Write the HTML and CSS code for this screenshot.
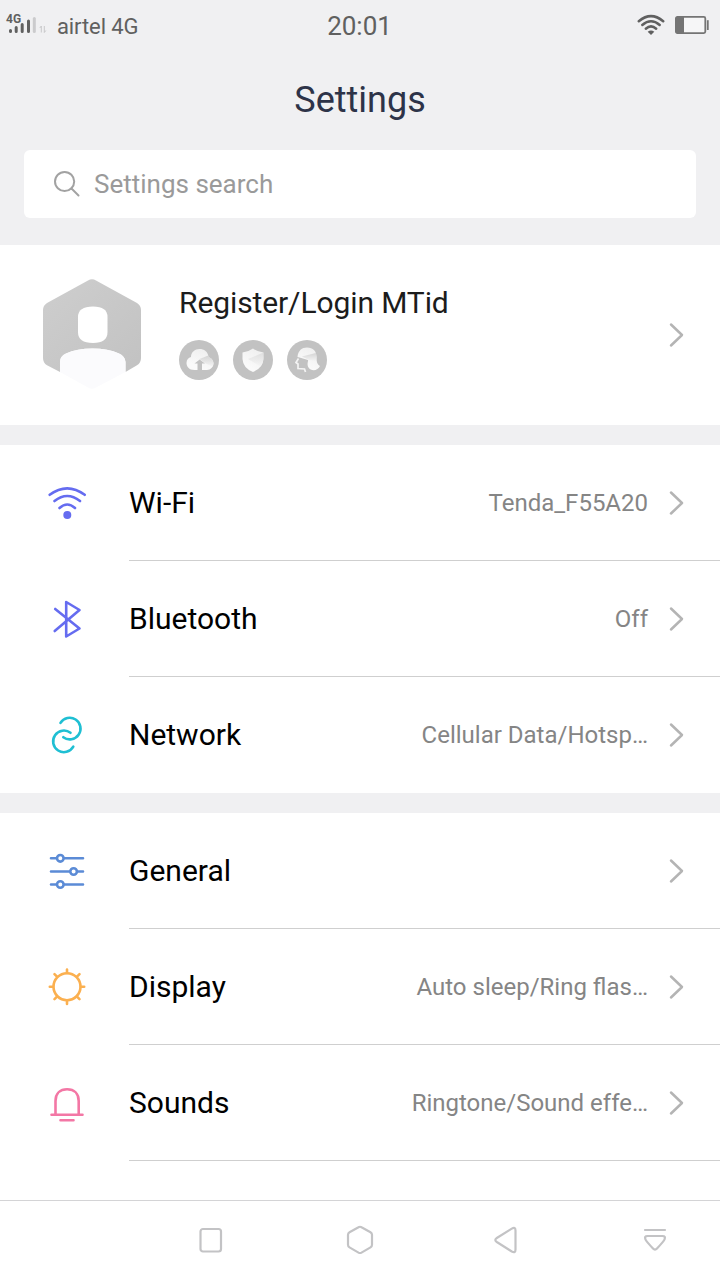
FILE: index.html
```html
<!DOCTYPE html>
<html lang="en">
<head>
    <meta charset="UTF-8">
    <meta name="viewport" content="width=device-width, initial-scale=1.0">
    <title>Settings</title>
    <link rel="stylesheet" href="styles.css">
</head>
<body>
    <svg class="defs" width="0" height="0">
        <symbol id="chevron" viewBox="0 0 16 26">
            <path d="M2 2.5L13 13L2 23.5" fill="none" stroke="#b4b4b4" stroke-width="2.5" stroke-linecap="round" stroke-linejoin="round"/>
        </symbol>
        <linearGradient id="hexFill" x1="0" y1="0" x2="1" y2="1">
            <stop offset="0" stop-color="#cecece"/>
            <stop offset="1" stop-color="#c2c2c2"/>
        </linearGradient>
        <linearGradient id="fade" x1="0" y1="1" x2="0.5" y2="0">
            <stop offset="0.3" stop-color="#fafafa"/>
            <stop offset="1" stop-color="#f0f0f0"/>
        </linearGradient>
        <linearGradient id="shade" x1="0" y1="0" x2="0" y2="1">
            <stop offset="0" stop-color="#d4d4d4"/>
            <stop offset="1" stop-color="#f4f4f4"/>
        </linearGradient>
    </svg>

    <header class="header">
        <div class="status-bar">
            <div class="status-left">
                <div class="signal">
                    <span class="signal-type">4G</span>
                    <svg width="42" height="18" viewBox="0 0 42 18">
                        <g stroke="#606060" stroke-width="3" stroke-linecap="round">
                            <path d="M4.5 13.6V14.4M10.2 10.5V14.4M16.2 7.5V14.4M22.5 4V14.4"/>
                            <path d="M28.3 1.5V14.4" stroke="#cbcbcd"/>
                        </g>
                        <path d="M35.3 15.5V9L33.8 11M38.3 9V15.500L39.8 13.500" fill="none" stroke="#c8c8ca" stroke-width="1"/>
                    </svg>
                </div>
                <span class="carrier">airtel 4G</span>
            </div>
            <span class="clock">20:01</span>
            <div class="status-right">
                <svg width="28" height="22" viewBox="0 0 28 22">
                    <g fill="none" stroke="#606060" stroke-width="2.5" stroke-linecap="round">
                        <path d="M1.8 7.2Q14 -3 26.2 7.2"/>
                        <path d="M5.3 11Q14 3.4 22.7 11"/>
                        <path d="M8.8 14.7Q14 10 19.2 14.7"/>
                    </g>
                    <path d="M10.7 17.8Q14 15 17.3 17.8L14 21Z" fill="#606060"/>
                </svg>
                <svg width="34" height="18" viewBox="0 0 34 18">
                    <rect x="0.9" y="0.9" width="29.4" height="16.2" rx="1.5" fill="#f6f6f7" stroke="#747474" stroke-width="1.8"/>
                    <path d="M1 1H9V17H1Z" fill="#747474"/>
                    <path d="M32.8 4.2V14" stroke="#747474" stroke-width="1.8"/>
                </svg>
            </div>
        </div>
        <h1 class="title">Settings</h1>
        <div class="search">
            <svg width="28" height="28" viewBox="0 0 28 28" fill="none" stroke="#a2a2a2" stroke-width="2" stroke-linecap="round">
                <circle cx="11.6" cy="11.5" r="9.6"/>
                <path d="M18.5 18.5L25.5 25.5"/>
            </svg>
            <span>Settings search</span>
        </div>
    </header>

    <section class="profile">
        <svg class="avatar" width="100" height="112" viewBox="0 0 100 112">
            <path d="M46 2.4Q50 0 54 2.4L95 25Q99 27.5 99 32V80Q99 85 95 87.3L83.5 94V84Q83 78 77 75.5Q66 70.5 50.5 70.5Q35 70.5 24 75.5Q18 78 18 84V94L5 87.3Q1 85 1 80V32Q1 27.5 5 25Z" fill="url(#hexFill)"/>
            <path d="M18 94V84Q18 78 24 75.5Q35 70.5 50.5 70.5Q66 70.5 77 75.5Q83 78 83.5 84V94L54 109.5Q50 112 46 109.5Z" fill="#fbfbfd"/>
            <path d="M36 39Q36 28.5 51 28.5Q65.5 28.5 65.5 39V54Q65.5 65 51 65Q36 65 36 54Z" fill="#fff"/>
        </svg>
        <div class="profile-info">
            <div class="profile-name">Register/Login MTid</div>
            <div class="badges">
                <svg width="40" height="40" viewBox="0 0 40 40">
                    <circle cx="20" cy="20" r="20" fill="#c2c2c2"/>
                    <path d="M18.5 30H15.5C10 30 7.5 26.5 7.5 23C7.5 20 9.500 17.5 12 17C12 12 16 9 20.5 9C25 9 29 11.5 29.5 17C32 18 34.5 20 34.5 23.5C34.5 27 31.5 30 28 30H23V23.5H26L20.7 19.5L15.5 23.5H18.5Z" fill="url(#fade)"/>
                    <path d="M20.5 19L29.3 15.500L29.5 17C32 18 34.5 20 34.5 23.5L33.5 26.5L25.500 23Z" fill="url(#shade)"/>
                </svg>
                <svg width="40" height="40" viewBox="0 0 40 40">
                    <circle cx="20" cy="20" r="20" fill="#c2c2c2"/>
                    <path d="M20 8.5Q24 11.5 30.5 12.5V19Q30 28 20 32Q10 28 9.5 19V12.5Q16 11.5 20 8.500Z" fill="url(#fade)"/>
                    <path d="M15 19L30.5 12.5V19Q30 23 27.5 26.5Z" fill="url(#shade)" opacity="0.6"/>
                </svg>
                <svg width="40" height="40" viewBox="0 0 40 40">
                    <circle cx="20" cy="20" r="20" fill="#c2c2c2"/>
                    <path d="M10.5 17C11 10.5 15 7.5 20 7.5C26 7.5 29.5 11 29.5 17C29.5 21 30 24.5 33 26C31 31 24 31.500 21.5 27.500C19.5 24 21.500 21 21 20L12.5 17.5Z" fill="url(#fade)"/>
                    <path d="M15 16.500L28.8 13L29.5 17L29 21L22 20Z" fill="url(#shade)"/>
                    <path d="M11.5 18.5L9 22.5L11 24V28.5L17.5 29L18.5 32" fill="none" stroke="#f4f4f4" stroke-width="1.7"/>
                </svg>
            </div>
        </div>
        <svg class="arrow"><use href="#chevron"/></svg>
    </section>

    <section class="group">
        <div class="row">
            <svg class="icon wifi" viewBox="0 0 44 44">
                <path d="M4.7 13.8Q22.200 0.8 39.7 13.8M9.5 20Q22.2 10 35 20M14.5 27Q22.2 20 30 27"/>
                <circle class="dot" cx="22.3" cy="34" r="4"/>
            </svg>
            <div class="row-body">
                <span class="label">Wi-Fi</span>
                <span class="value">Tenda_F55A20</span>
                <svg class="arrow"><use href="#chevron"/></svg>
            </div>
        </div>
        <div class="row">
            <svg class="icon bluetooth" viewBox="0 0 44 44">
                <path d="M10.2 12L34.5 31.5L21.2 39.500V5L34.5 13L9.700 34"/>
            </svg>
            <div class="row-body">
                <span class="label">Bluetooth</span>
                <span class="value">Off</span>
                <svg class="arrow"><use href="#chevron"/></svg>
            </div>
        </div>
        <div class="row">
            <svg class="icon network" viewBox="0 0 44 44">
                <path d="M15.5 9.900A10.8 10.8 0 1 1 18.3 24.2M25.5 19.800A10.8 10.8 0 1 0 28.3 33.7"/>
            </svg>
            <div class="row-body">
                <span class="label">Network</span>
                <span class="value">Cellular Data/Hotsp…</span>
                <svg class="arrow"><use href="#chevron"/></svg>
            </div>
        </div>
    </section>

    <section class="group">
        <div class="row">
            <svg class="icon general" viewBox="0 0 44 44">
                <path d="M6 9.300H38M6 22.500H38M6 35.500H38"/>
                <circle cx="15.300" cy="9.300" r="3.300"/>
                <circle cx="28.600" cy="22.500" r="3.300"/>
                <circle cx="15.300" cy="35.500" r="3.300"/>
            </svg>
            <div class="row-body">
                <span class="label">General</span>
                <svg class="arrow"><use href="#chevron"/></svg>
            </div>
        </div>
        <div class="row">
            <svg class="icon display" viewBox="0 0 44 44">
                <circle cx="22" cy="21.7" r="13.5"/>
                <path d="M22 4.500V8M22 35.500V39M4.800 21.700H8M36 21.700H39.200M9.500 9.200L12 11.700M34.500 9.200L32 11.700M9.500 34.200L12 31.700M34.500 34.200L32 31.700"/>
            </svg>
            <div class="row-body">
                <span class="label">Display</span>
                <span class="value">Auto sleep/Ring flas…</span>
                <svg class="arrow"><use href="#chevron"/></svg>
            </div>
        </div>
        <div class="row">
            <svg class="icon sounds" viewBox="0 0 44 44">
                <path d="M10.500 33V20C10.500 12.500 15 8.300 22.100 8.300S33.700 12.500 33.700 20V33M6.500 33.800H37.500M15.500 39.300H28.500"/>
            </svg>
            <div class="row-body">
                <span class="label">Sounds</span>
                <span class="value">Ringtone/Sound effe…</span>
                <svg class="arrow"><use href="#chevron"/></svg>
            </div>
        </div>
    </section>

    <nav class="nav">
        <svg viewBox="0 0 32 32"><rect x="5.5" y="5" width="20.5" height="22.500" rx="2.500"/></svg>
        <svg viewBox="0 0 32 32"><path d="M15.500 3.200Q17 2.300 18.500 3.200L27.500 8.200Q29 9 29 10.800V20.800Q29 22.500 27.500 23.400L18.500 28.600Q17 29.400 15.500 28.600L6.500 23.400Q5 22.500 5 20.800V10.800Q5 9 6.500 8.200Z"/></svg>
        <svg viewBox="0 0 32 32"><path d="M20.800 4.600Q24.500 2.500 24.500 6.500V25.500Q24.500 29.500 20.800 27.500L5.800 18Q2.800 16 5.800 14Z"/></svg>
        <svg viewBox="0 0 32 32"><path d="M6 6H26M8.500 12H23.500Q27 12 25.500 15.500Q25 17 18 24.500Q16 26.700 14 24.500Q7 17 6.500 15.500Q5 12 8.500 12Z"/></svg>
    </nav>
</body>
</html>
```

FILE: styles.css
```css
* {
    box-sizing: border-box;
}

body {
    margin: 0;
    height: 1280px;
    display: flex;
    flex-direction: column;
    font-family: Roboto, "Liberation Sans", sans-serif;
    background-color: #fff;
    overflow: hidden;
}

svg {
    display: block;
    flex-shrink: 0;
}

.defs {
    position: absolute;
}

.header {
    height: 245px;
    background: #f0f0f2;
}

.status-bar {
    display: grid;
    grid-template-columns: 1fr auto 1fr;
    align-items: center;
    height: 52px;
    padding: 0 11px 0 10px;
    color: #606060;
}

.status-left,
.status-right {
    display: flex;
    align-items: center;
}

.status-left {
    gap: 9px;
    margin-left: -4px;
}

.status-right {
    justify-content: flex-end;
    gap: 10px;
    padding-bottom: 3px;
}

.signal {
    position: relative;
}

.signal-type {
    position: absolute;
    top: -4px;
    left: 0;
    font-size: 12px;
    line-height: 13px;
    font-weight: bold;
}

.carrier {
    font-size: 22px;
    letter-spacing: -0.1px;
}

.clock {
    font-size: 26px;
}

.title {
    margin: 0;
    height: 98px;
    line-height: 96px;
    text-align: center;
    font-size: 36px;
    font-weight: normal;
    color: #2d3348;
}

.search {
    display: flex;
    align-items: center;
    gap: 13px;
    height: 68px;
    margin: 0 24px;
    padding-left: 29px;
    border-radius: 6px;
    background: #fff;
    font-size: 26px;
    color: #9a9a9a;
}

.profile {
    display: flex;
    align-items: center;
    height: 180px;
    padding: 0 35px 0 42px;
}

.avatar {
    margin-bottom: 2px;
}

.profile-info {
    flex: 1;
    margin-left: 37px;
    padding-bottom: 6px;
}

.profile-name {
    font-size: 30px;
    line-height: 36px;
    letter-spacing: -0.1px;
    color: #1c1c1c;
}

.badges {
    display: flex;
    gap: 14px;
    margin-top: 19px;
}

.arrow {
    width: 16px;
    height: 26px;
}

.group {
    border-top: 20px solid #f0f0f2;
}

.row {
    display: flex;
    align-items: center;
    height: 116px;
    padding-left: 45px;
}

.row-body {
    flex: 1;
    display: flex;
    align-items: center;
    height: 116px;
    margin-left: 40px;
    padding-right: 35px;
    border-bottom: 1px solid #cfcfcf;
}

.group:nth-of-type(2) .row:last-child .row-body {
    border-bottom-color: transparent;
}

.label {
    flex: 1;
    font-size: 30px;
    color: #000;
}

.value {
    margin-right: 21px;
    font-size: 24px;
    color: #858585;
}

.icon {
    width: 44px;
    height: 44px;
    fill: none;
    stroke: currentColor;
    stroke-width: 2.6;
    stroke-linecap: round;
    stroke-linejoin: round;
}

.icon .dot {
    fill: currentColor;
    stroke: none;
}

.wifi,
.bluetooth {
    color: #656cf0;
}

.network {
    color: #1fbfd3;
}

.general {
    color: #5b8bd6;
}

.general circle {
    fill: #fff;
}

.display {
    color: #fbb050;
}

.sounds {
    color: #f377a5;
}

.nav {
    display: flex;
    gap: 116px;
    height: 80px;
    margin-top: auto;
    padding: 23px 0 0 195px;
    border-top: 1px solid #d4d4d6;
}

.nav svg {
    width: 32px;
    height: 32px;
    fill: none;
    stroke: #c3c3c5;
    stroke-width: 2.2;
    stroke-linecap: round;
    stroke-linejoin: round;
}
```
